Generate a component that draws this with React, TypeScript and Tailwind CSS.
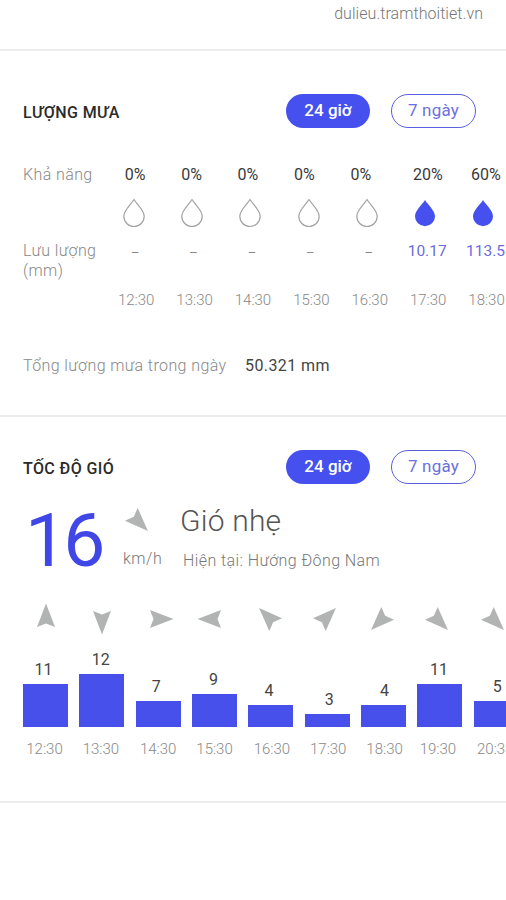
import clsx from 'clsx'

interface RainHour {
  time: string
  chance: number
  amount: string | null
}

interface WindHour {
  time: string
  speed: number
  height: number
  angle: number
  arrowX: number
  speedX: number
  timeX: number
}

const rainHours: RainHour[] = [
  { time: '12:30', chance: 0, amount: null },
  { time: '13:30', chance: 0, amount: null },
  { time: '14:30', chance: 0, amount: null },
  { time: '15:30', chance: 0, amount: null },
  { time: '16:30', chance: 0, amount: null },
  { time: '17:30', chance: 20, amount: '10.17' },
  { time: '18:30', chance: 60, amount: '113.5' },
]

// angle is clockwise from north, the *X values nudge items inside their cell
const windHours: WindHour[] = [
  { time: '12:30', speed: 11, height: 43, angle: 0, arrowX: 0, speedX: -2, timeX: -1 },
  { time: '13:30', speed: 12, height: 53, angle: 180, arrowX: 0, speedX: -1, timeX: -1 },
  { time: '14:30', speed: 7, height: 26, angle: 90, arrowX: 0, speedX: -2, timeX: 0 },
  { time: '15:30', speed: 9, height: 33, angle: 270, arrowX: -2, speedX: -1, timeX: 0 },
  { time: '16:30', speed: 4, height: 22, angle: 315, arrowX: -0.5, speedX: -2, timeX: 1 },
  { time: '17:30', speed: 3, height: 13, angle: 45, arrowX: -2, speedX: 2, timeX: 1 },
  { time: '18:30', speed: 4, height: 22, angle: 225, arrowX: -1.5, speedX: 1, timeX: 1 },
  { time: '19:30', speed: 11, height: 43, angle: 135, arrowX: -3, speedX: -1, timeX: -2 },
  { time: '20:30', speed: 5, height: 26, angle: 135, arrowX: -3.5, speedX: 1, timeX: -1 },
]

function Drop({ filled }: { filled: boolean }) {
  return (
    <svg width="24" height="30" viewBox="0 0 24 30" className="block">
      <path
        d={
          filled
            ? 'M12 2C9 7 2 12.5 2 18.4A10 9.8 0 0 0 22 18.4C22 12.5 15 7 12 2Z'
            : 'M12 1.5C9 6.5 1.8 12.3 1.8 18.3A10.2 10.2 0 0 0 22.2 18.3C22.2 12.3 15 6.5 12 1.5Z'
        }
        fill={filled ? '#4650ee' : 'none'}
        stroke={filled ? 'none' : '#a3a3a3'}
        strokeWidth="1.2"
        strokeLinejoin="round"
      />
    </svg>
  )
}

function WindArrow({ angle }: { angle: number }) {
  return (
    <svg width="26" height="26" viewBox="-13 -13 26 26" className="block overflow-visible">
      <path d="M0 -15.5L9 8L0 4.5L-9 8Z" fill="#b1b4b3" transform={`rotate(${angle})`} />
    </svg>
  )
}

function SectionHeader({ title }: { title: string }) {
  return (
    <div className="flex h-[34px] items-center pl-[23px] pr-[30px]">
      <h2 className="mt-1 flex-1 text-[16px] font-medium leading-5 tracking-[0.4px] text-[#2a2a2a]">
        {title}
      </h2>
      <button className="h-[34px] w-[84px] rounded-full bg-[#4650ee] text-[17px] font-medium text-white">
        24 giờ
      </button>
      <button className="ml-[21px] h-[34px] w-[85px] rounded-full border border-[#5a5fe0] text-[17px] tracking-[0.2px] text-[#6d70dd]">
        7 ngày
      </button>
    </div>
  )
}

function RainSection() {
  return (
    <section className="h-[366px] border-b-2 border-[#ececec] pt-[42.5px]">
      <SectionHeader title="LƯỢNG MƯA" />

      <div className="mt-[37.5px] flex h-5 items-center pl-[23px]">
        <span className="w-[84px] shrink-0 text-[16px] font-light tracking-[0.4px] text-[#888]">
          Khả năng
        </span>
        {rainHours.map((hour, i) => (
          <span
            key={hour.time}
            className={clsx(
              'shrink-0 text-center text-[16px] text-[#3a3a3a]',
              i < 5 ? 'w-[56.4px]' : 'w-[58px]',
              i === 5 && 'ml-[10px]'
            )}
          >
            {hour.chance}%
          </span>
        ))}
      </div>

      <div className="mt-[13px] flex pl-[105px]">
        {rainHours.map((hour) => (
          <div key={hour.time} className="flex w-[58.2px] shrink-0 justify-center">
            <Drop filled={hour.chance > 0} />
          </div>
        ))}
      </div>

      <div className="mt-[13px] flex h-10 pl-[23px]">
        <span className="w-[83px] shrink-0 text-[16px] font-light leading-5 tracking-[0.4px] text-[#888]">
          Lưu lượng
          <br />
          (mm)
        </span>
        {rainHours.map((hour) => (
          <span
            key={hour.time}
            className={clsx(
              'w-[58.4px] shrink-0 text-center leading-5',
              hour.amount ? 'text-[15.5px] text-[#6a6ce0]' : 'pt-0.5 text-[13px] text-[#888]'
            )}
          >
            {hour.amount ?? '–'}
          </span>
        ))}
      </div>

      <div className="mt-[9px] flex h-5 items-center pl-[107px]">
        {rainHours.map((hour) => (
          <span key={hour.time} className="w-[58.4px] shrink-0 text-center text-[15px] font-light text-[#888]">
            {hour.time}
          </span>
        ))}
      </div>

      <div className="mt-[46px] flex h-5 items-center pl-[23px] text-[16px] tracking-[0.4px]">
        <span className="w-[222px] font-light text-[#888]">Tổng lượng mưa trong ngày</span>
        <span className="text-[#444]">50.321 mm</span>
      </div>
    </section>
  )
}

function WindSection() {
  return (
    <section className="h-[386px] border-b-2 border-[#ececec] pt-[33px]">
      <SectionHeader title="TỐC ĐỘ GIÓ" />

      <div className="mt-[19px] flex h-[74px] pl-[23px]">
        <div className="w-[100px] pl-0.5 text-[75px] leading-[74px] tracking-[-4px] text-[#4047e6]">16</div>
        <div className="w-[56px]">
          <div className="mt-1 pl-px">
            <WindArrow angle={135} />
          </div>
          <div className="mt-4 text-[16px] font-light leading-5 tracking-[0.5px] text-[#777]">km/h</div>
        </div>
        <div>
          <div className="pl-px text-[30px] font-light leading-9 tracking-[0.2px] text-[#555]">Gió nhẹ</div>
          <div className="mt-[12px] pl-1 text-[16px] font-light leading-5 tracking-[0.42px] text-[#777]">
            Hiện tại: Hướng Đông Nam
          </div>
        </div>
      </div>

      <div className="mt-[29px] flex gap-[11.35px] pl-[23px]">
        {windHours.map((hour) => (
          <div key={hour.time} className="flex w-[45px] shrink-0 flex-col items-center">
            <div className="relative" style={{ left: hour.arrowX }}>
              <WindArrow angle={hour.angle} />
            </div>
            <div className="flex h-[95px] w-full flex-col items-center justify-end">
              <span className="relative mb-1 text-[16px] leading-5 text-[#444]" style={{ left: hour.speedX }}>
                {hour.speed}
              </span>
              <div className="w-full bg-[#4850ec]" style={{ height: hour.height }} />
            </div>
            <span
              className="relative mt-3 text-[15px] font-light leading-5 text-[#888]"
              style={{ left: hour.timeX }}
            >
              {hour.time}
            </span>
          </div>
        ))}
      </div>
    </section>
  )
}

export default function App() {
  return (
    <div className="h-[900px] w-[506px] overflow-hidden bg-white font-['Roboto',sans-serif]">
      <header className="flex h-[51px] justify-end border-b-2 border-[#ececec] pr-[23px] pt-1">
        <span className="text-[16px] font-light leading-5 tracking-[0.05px] text-[#777]">
          dulieu.tramthoitiet.vn
        </span>
      </header>
      <RainSection />
      <WindSection />
    </div>
  )
}
